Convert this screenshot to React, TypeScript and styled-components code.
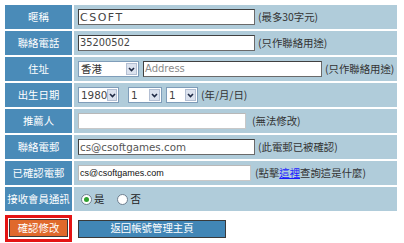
import React from 'react'
import styled, { createGlobalStyle } from 'styled-components'

const GlobalStyle = createGlobalStyle`
  html, body {
    margin: 0;
    padding: 0;
    background: #ffffff;
  }
  body {
    font-family: "Noto Sans CJK TC", "DejaVu Sans", sans-serif;
  }
`

const cjk = `"Noto Sans CJK TC", "DejaVu Sans", sans-serif`

const Page = styled.div`
  padding: 5px 0 0 5px;
  width: 392px;
`

const Form = styled.div`
  display: grid;
  grid-template-columns: 67px 1fr;
  grid-auto-rows: 24px;
  gap: 2px;
`

const Label = styled.div`
  background: #4a8bb8;
  color: #ffffff;
  font-family: ${cjk};
  font-size: 10.4px;
  display: flex;
  align-items: center;
  justify-content: center;
  white-space: nowrap;
  line-height: 1;
`

const Cell = styled.div`
  background: #b0ccda;
  display: flex;
  align-items: center;
  padding-left: 4px;
  white-space: nowrap;
`

const TextBox = styled.div<{ $w: number; $light?: boolean; $mr?: number }>`
  box-sizing: border-box;
  width: ${p => p.$w}px;
  height: 16px;
  background: #ffffff;
  border: 1px solid ${p => (p.$light ? '#c8c8c8' : '#6a6a6a')};
  border-top-color: ${p => (p.$light ? '#b8b8b8' : '#404040')};
  border-left-color: ${p => (p.$light ? '#b8b8b8' : '#404040')};
  margin-right: ${p => p.$mr ?? 3}px;
  display: flex;
  align-items: center;
  padding-left: 1px;
  overflow: hidden;
`

const Value = styled.span<{ $size: number; $spacing?: number; $color?: string; $font?: string }>`
  font-family: ${p => p.$font ?? '"DejaVu Sans", sans-serif'};
  font-size: ${p => p.$size}px;
  letter-spacing: ${p => p.$spacing ?? 0}px;
  color: ${p => p.$color ?? '#444444'};
  line-height: 1;
`

const Hint = styled.span`
  font-family: ${cjk};
  font-size: 10.4px;
  color: #333333;
  line-height: 1;
`

const HintLink = styled.a`
  color: #1a1aff;
  text-decoration: underline;
`

const SelectBox = styled.div<{ $w: number; $mr: number }>`
  box-sizing: border-box;
  width: ${p => p.$w}px;
  height: 16px;
  border: 1px solid #7f9db9;
  background: #ffffff;
  display: flex;
  align-items: center;
  justify-content: space-between;
  padding: 1px 1px 1px 2px;
  margin-right: ${p => p.$mr}px;
`

const ArrowBox = styled.span`
  box-sizing: border-box;
  width: 11px;
  height: 12px;
  background: #dbe2ee;
  border: 1px solid #b3bfd3;
  display: flex;
  align-items: center;
  justify-content: center;
`

const RadioGroup = styled.label`
  display: flex;
  align-items: center;
  gap: 2px;
  margin-right: 10px;
  margin-left: 3px;
`

const RadioDot = styled.span<{ $on?: boolean }>`
  box-sizing: border-box;
  width: 11px;
  height: 11px;
  border-radius: 50%;
  border: 1px solid #6f7f8f;
  background: #ffffff;
  display: flex;
  align-items: center;
  justify-content: center;
  &::after {
    content: '';
    width: 5px;
    height: 5px;
    border-radius: 50%;
    background: ${p => (p.$on ? '#2fa12f' : 'transparent')};
  }
`

const RadioText = styled.span`
  font-family: ${cjk};
  font-size: 10.4px;
  color: #222222;
  line-height: 1;
`

const Actions = styled.div`
  display: flex;
  align-items: center;
  gap: 6px;
  margin-top: 4px;
`

const Highlight = styled.div`
  border: 3px solid #e41414;
  padding: 1px 1px 2px 1px;
  display: flex;
`

const Button = styled.button<{ $bg: string; $w: number }>`
  box-sizing: border-box;
  width: ${p => p.$w}px;
  height: 18px;
  background: ${p => p.$bg};
  border: 1px solid #3a3a3a;
  color: #ffffff;
  font-family: ${cjk};
  font-size: 10.4px;
  line-height: 1;
  padding: 0;
  display: flex;
  align-items: center;
  justify-content: center;
`

const Chevron = () => (
  <svg width="7" height="5" viewBox="0 0 7 5">
    <path d="M1 1 L3.5 3.5 L6 1" fill="none" stroke="#1f2a44" strokeWidth="1.6" />
  </svg>
)

const Select = ({ text, w, mr, cjkText }: { text: string; w: number; mr: number; cjkText?: boolean }) => (
  <SelectBox $w={w} $mr={mr}>
    {cjkText ? (
      <Value $size={10.4} $color="#333" $font={cjk}>{text}</Value>
    ) : (
      <Value $size={10.4} $color="#444">{text}</Value>
    )}
    <ArrowBox>
      <Chevron />
    </ArrowBox>
  </SelectBox>
)

const App = () => {
  return (
    <Page>
      <GlobalStyle />
      <Form>
        <Label>暱稱</Label>
        <Cell>
          <TextBox $w={177}>
            <Value $size={11} $spacing={1.5}>CSOFT</Value>
          </TextBox>
          <Hint>(最多30字元)</Hint>
        </Cell>

        <Label>聯絡電話</Label>
        <Cell>
          <TextBox $w={177}>
            <Value $size={9.8}>35200502</Value>
          </TextBox>
          <Hint>(只作聯絡用途)</Hint>
        </Cell>

        <Label>住址</Label>
        <Cell>
          <Select text="香港" w={61} mr={4} cjkText />
          <TextBox $w={179}>
            <Value $size={10} $color="#8a8a8a">Address</Value>
          </TextBox>
          <Hint>(只作聯絡用途)</Hint>
        </Cell>

        <Label>出生日期</Label>
        <Cell>
          <Select text="1980" w={41} mr={9} />
          <Select text="1" w={34} mr={4} />
          <Select text="1" w={32} mr={3} />
          <Hint>(年/月/日)</Hint>
        </Cell>

        <Label>推薦人</Label>
        <Cell>
          <TextBox $w={168} $light $mr={6} />
          <Hint>(無法修改)</Hint>
        </Cell>

        <Label>聯絡電郵</Label>
        <Cell>
          <TextBox $w={177}>
            <Value $size={10.3} $color="#555">cs@csoftgames.com</Value>
          </TextBox>
          <Hint>(此電郵已被確認)</Hint>
        </Cell>

        <Label>已確認電郵</Label>
        <Cell>
          <TextBox $w={173} $light $mr={4}>
            <Value $size={9} $color="#111" $font={'"Liberation Sans", sans-serif'}>cs@csoftgames.com</Value>
          </TextBox>
          <Hint>
            (點擊<HintLink>這裡</HintLink>查詢這是什麼)
          </Hint>
        </Cell>

        <Label>接收會員通訊</Label>
        <Cell>
          <RadioGroup>
            <RadioDot $on />
            <RadioText>是</RadioText>
          </RadioGroup>
          <RadioGroup>
            <RadioDot />
            <RadioText>否</RadioText>
          </RadioGroup>
        </Cell>
      </Form>

      <Actions>
        <Highlight>
          <Button $bg="#e0692c" $w={59}>確認修改</Button>
        </Highlight>
        <Button $bg="#4186b6" $w={148}>返回帳號管理主頁</Button>
      </Actions>
    </Page>
  )
}

export default App
